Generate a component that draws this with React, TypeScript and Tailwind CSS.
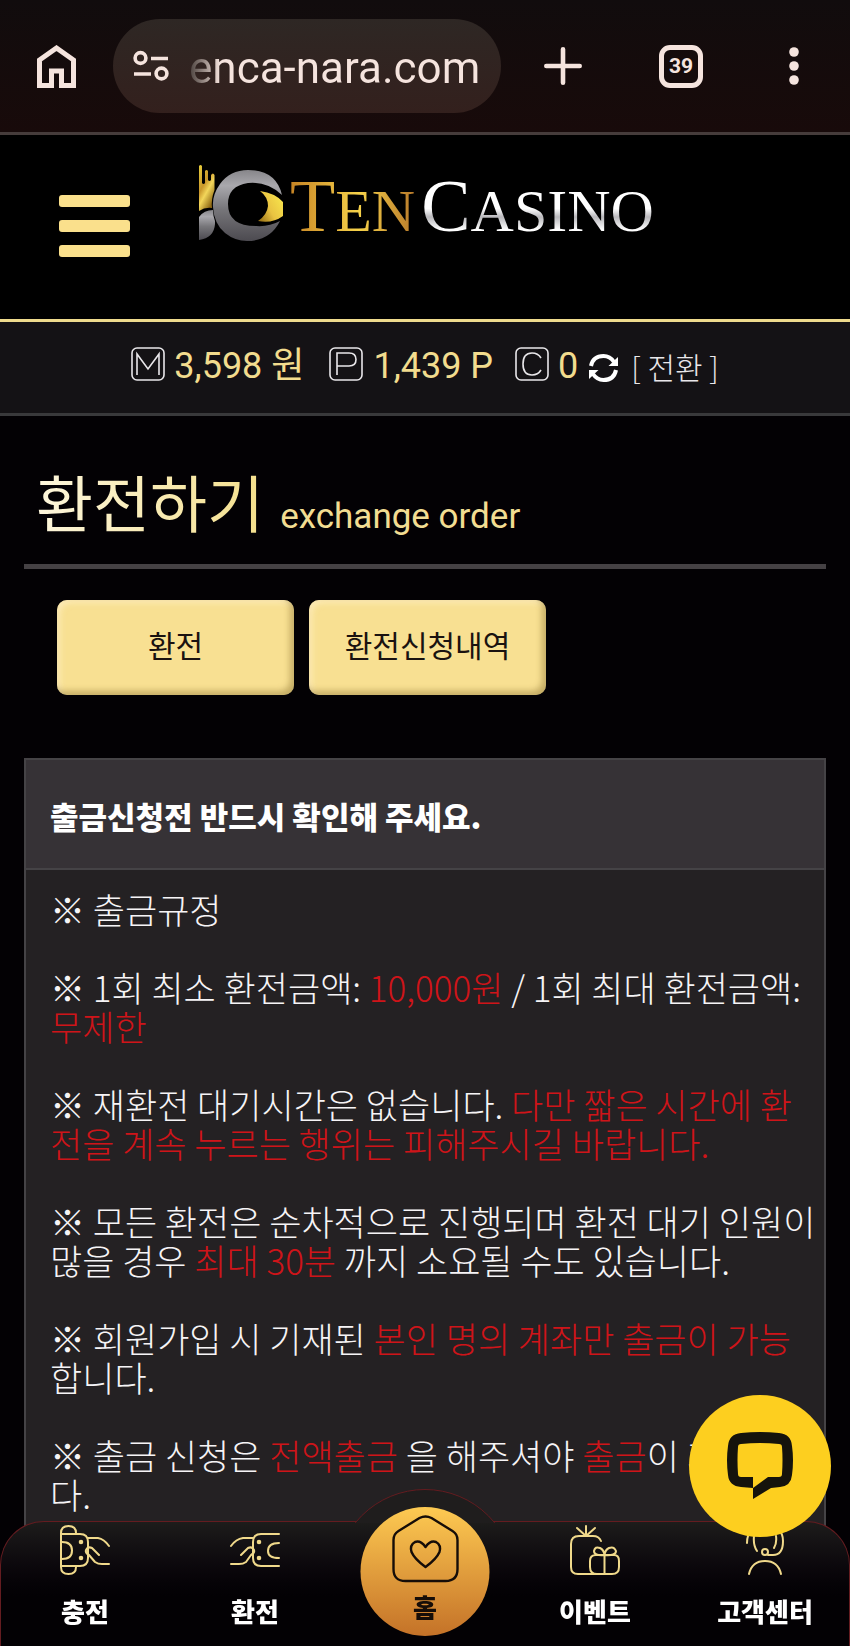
import React from 'react';

const KR = "font-['Noto_Sans_CJK_KR',sans-serif]";
const MIX = "font-[Roboto,'Noto_Sans_CJK_KR',sans-serif]";

function Red({ children }: { children: React.ReactNode }) {
  return <span className="text-[#cf1419]">{children}</span>;
}

function BrowserBar() {
  return (
    <div className={`flex h-[135px] items-center border-b-3 border-[#463c3b] bg-linear-to-b from-[#110c0d] to-[#180a0a] pr-[51px] pl-[37px] text-[#f5e4de] ${MIX}`}>
      <button type="button" aria-label="Home" className="shrink-0">
        <svg width="39" height="43" viewBox="0 0 39 43" fill="none" stroke="currentColor" strokeWidth="5" className="block">
          <path d="M2.5 40.5V15L19.5 3L36.5 15V40.5H24.5V26H14.5V40.5Z" />
        </svg>
      </button>
      <div className="ml-[37px] flex h-[94px] min-w-0 flex-1 items-center rounded-full bg-linear-to-b from-[#2e2724] to-[#33201d] pl-5">
        <svg width="36" height="32" viewBox="0 0 36 32" fill="none" stroke="currentColor" strokeWidth="3.6" className="shrink-0">
          <circle cx="7.5" cy="8" r="5.4" />
          <path d="M18 8.5H35M1 24H18" />
          <circle cx="28.5" cy="23.5" r="5.4" />
        </svg>
        <label htmlFor="address" className="sr-only">Address</label>
        <input
          id="address"
          readOnly
          value="enca-nara.com"
          className="mt-1 ml-5 h-[70px] w-full min-w-0 bg-linear-to-r from-[#4a413d] via-[#f5e4de] via-10% to-[#f5e4de] bg-clip-text text-[44px] leading-[70px] text-transparent outline-none"
        />
      </div>
      <button type="button" aria-label="New tab" className="ml-[43px] shrink-0">
        <svg width="38" height="38" viewBox="0 0 38 38" fill="none" stroke="currentColor" strokeWidth="4.6" strokeLinecap="round" className="block">
          <path d="M19 2.3V35.7M2.3 19H35.7" />
        </svg>
      </button>
      <button type="button" aria-label="Tabs" className="ml-[77px] flex h-[43px] w-[44px] shrink-0 items-center justify-center rounded-[11px] border-5 border-current text-[21px] leading-6 font-bold">
        39
      </button>
      <button type="button" aria-label="Menu" className="ml-[86px] shrink-0">
        <svg width="10" height="38" viewBox="0 0 10 38" fill="currentColor" className="block">
          <circle cx="5" cy="5" r="4.8" />
          <circle cx="5" cy="19" r="4.8" />
          <circle cx="5" cy="33" r="4.8" />
        </svg>
      </button>
    </div>
  );
}

function LogoMark() {
  return (
    <svg width="86" height="80" viewBox="0 0 86 80" className="block shrink-0">
      <defs>
        <linearGradient id="silver" x1="0" y1="0" x2="0" y2="1">
          <stop offset="0" stopColor="#87868a" />
          <stop offset="0.22" stopColor="#a9a8ad" />
          <stop offset="0.55" stopColor="#77767a" />
          <stop offset="1" stopColor="#4c4a50" />
        </linearGradient>
        <linearGradient id="gold" x1="0" y1="0" x2="0.6" y2="1">
          <stop offset="0" stopColor="#e8cf3c" />
          <stop offset="0.45" stopColor="#c9962a" />
          <stop offset="0.65" stopColor="#f3d65a" />
          <stop offset="1" stopColor="#8a6412" />
        </linearGradient>
        <linearGradient id="goldEye" x1="1" y1="0.3" x2="0" y2="1">
          <stop offset="0" stopColor="#f7e34c" />
          <stop offset="0.5" stopColor="#e9c341" />
          <stop offset="1" stopColor="#8f6710" />
        </linearGradient>
      </defs>
      <path fill="url(#gold)" d="M1 2Q2.500 0 4 2V19Q5.500 21 7 19V7Q8.500 5 10 7V16Q11.500 18 13 16V11Q15 8 16.500 11V26Q13 35 14 44Q7 43 1 47Z" />
      <path fill="url(#silver)" d="M1 53Q6 46 15 46Q15 52 17 57V60Q16 74 1 76Z" />
      <path fill="url(#silver)" fillRule="evenodd" d="M84 31Q78 6 50 6Q32 6 22 20Q14 31 15 43Q16 60 27 69Q37 77 49 77Q72 77 82 57Q71 63 58 62Q30 62 30 40Q30 22 50 19Q69 17 84 31Z" />
      <path fill="url(#goldEye)" d="M62 27Q77 29 85 38V52Q74 60 60 57Q69 51 70 42Q70 33 62 27Z" />
    </svg>
  );
}

function SiteHeader() {
  return (
    <header className="flex h-[187px] items-start border-b-3 border-[#eedb8d] bg-black px-[59px]">
      <button type="button" aria-label="Open menu" className="mt-[60px] flex w-[71px] shrink-0 flex-col gap-[13px]">
        <span className="h-3 w-full rounded-[3px] bg-[#fae08c]" />
        <span className="h-3 w-full rounded-[3px] bg-[#fae08c]" />
        <span className="h-3 w-full rounded-[3px] bg-[#fae08c]" />
      </button>
      <a href="#home" aria-label="Ten Casino" className="mt-[29px] ml-[68px] flex items-start">
        <LogoMark />
        <span className="mt-0.5 ml-1.5 flex items-baseline gap-1.5 font-['Liberation_Serif',serif] text-[60px] leading-[80px] whitespace-nowrap">
          <span className="bg-linear-to-r from-[#c68424] via-[#f6d24a] via-55% to-[#b87a2a] bg-clip-text text-transparent">
            <span className="text-[74px]">T</span>EN
          </span>
          <span className="bg-linear-to-b from-white from-50% via-[#b9b8bc] via-60% to-white to-75% bg-clip-text text-transparent">
            <span className="text-[74px]">C</span>ASINO
          </span>
        </span>
      </a>
    </header>
  );
}

function LetterBox({ d }: { d: string }) {
  return (
    <svg width="34" height="34" viewBox="0 0 34 34" fill="none" stroke="#e9e7ea" strokeWidth="1.6" className="-mt-1 shrink-0">
      <rect x="1" y="1" width="32" height="32" rx="5" />
      <path d={d} />
    </svg>
  );
}

function Balance() {
  return (
    <div className={`flex h-[94px] items-center justify-center border-b-3 border-[#39393b] bg-[#141215] pb-1 text-[36px] leading-[44px] whitespace-nowrap text-[#f2dc8e] ${MIX}`}>
      <LetterBox d="M6 28V7L17 22L28 7V28" />
      <span className="ml-[9px]">3,598 원</span>
      <span className="ml-[25px] flex"><LetterBox d="M8 28V6H20Q27 6 27 12.500Q27 19 20 19H8" /></span>
      <span className="ml-[10px]">1,439 P</span>
      <span className="ml-[22px] flex"><LetterBox d="M26 11Q23 6 17 6Q8 6 8 17Q8 28 17 28Q23 28 26 23" /></span>
      <span className="ml-[9px]">0</span>
      <button type="button" className={`ml-[10px] flex items-center gap-3 text-[30px] font-light text-[#e9e7ea] ${KR}`}>
        <svg width="31" height="30" viewBox="0 0 31 30" fill="none" stroke="#fff" strokeWidth="4" className="mt-1 shrink-0">
          <path d="M3 13Q5 3 15.500 3Q22 3 26 9" />
          <path d="M28 17Q26 27 15.500 27Q9 27 5 21" />
          <path d="M30 4V13H20.500Z" fill="#fff" stroke="none" />
          <path d="M1 26V17H10.500Z" fill="#fff" stroke="none" />
        </svg>
        <span>[ 전환 ]</span>
      </button>
    </div>
  );
}

const tabClass =
  'h-[95px] w-[237px] rounded-[10px] bg-[#f8e092] pb-2 text-[30px] leading-10 text-[#1a1210] shadow-[inset_-4px_-4px_6px_rgba(120,95,30,0.4),inset_3px_3px_6px_rgba(255,240,200,0.7)]';

function Notice() {
  return (
    <section className="flex flex-1 flex-col border-2 border-b-0 border-[#454346] bg-[#242123]">
      <h2 className="border-b-2 border-[#454346] bg-[#363236] pt-9 pb-8 pl-6 text-[31px] leading-[40px] font-black text-white">
        출금신청전 반드시 확인해 주세요.
      </h2>
      <div className="flex flex-col gap-[39px] pt-[19px] pb-8 pl-6 text-[35px] leading-[39px] font-light whitespace-nowrap text-[#f6f4f6]">
        <p>※ 출금규정</p>
        <p>
          ※ 1회 최소 환전금액: <Red>10,000원</Red> / 1회 최대 환전금액:<br />
          <Red>무제한</Red>
        </p>
        <p>
          ※ 재환전 대기시간은 없습니다. <Red>다만 짧은 시간에 환<br />전을 계속 누르는 행위는 피해주시길 바랍니다.</Red>
        </p>
        <p>
          ※ 모든 환전은 순차적으로 진행되며 환전 대기 인원이<br />
          많을 경우 <Red>최대 30분</Red> 까지 소요될 수도 있습니다.
        </p>
        <p>
          ※ 회원가입 시 기재된 <Red>본인 명의 계좌만 출금이 가능</Red><br />
          합니다.
        </p>
        <p>
          ※ 출금 신청은 <Red>전액출금</Red> 을 해주셔야 <Red>출금</Red>이 가능합니<br />
          다.
        </p>
      </div>
    </section>
  );
}

function NavIcon({ children }: { children: React.ReactNode }) {
  return (
    <svg width="50" height="50" viewBox="0 0 50 50" fill="none" stroke="#f0d98b" strokeWidth="2" strokeLinecap="round" strokeLinejoin="round" className="block">
      {children}
    </svg>
  );
}

function NavItem({ label, children }: { label: string; children: React.ReactNode }) {
  return (
    <a href={`#${label}`} className="flex flex-1 flex-col items-center gap-4 pt-1 text-white">
      <NavIcon>{children}</NavIcon>
      <span>{label}</span>
    </a>
  );
}

function BottomNav() {
  return (
    <nav className="fixed inset-x-0 bottom-0 h-[125px] text-[26px] leading-10 font-black">
      <div className="h-full rounded-t-[44px] border border-b-0 border-[#641c20] bg-linear-to-b from-[#1d1c1b] to-[#030104] to-60%" />
      <div className="absolute -top-8 left-1/2 h-[34px] w-[180px] -translate-x-1/2 overflow-hidden">
        <div className="size-[180px] rounded-full border border-[#641c20] bg-[#1f1d1d]" />
      </div>
      <div className="absolute inset-0 flex">
        <NavItem label="충전">
          <path d="M1 8Q1 1 8.500 1Q16 1 16 8V9M1 8V42Q1 49 8.500 49Q16 49 16 42V41M1 9H20Q28 9 28 17V33Q28 41 20 41H1" />
          <path d="M2 17Q12 17 12 25.500Q12 34 2 34M28 13H38Q44 14 49 21M39 30L32 23Q28 21 26 25Q25 28 29 30L35 37Q38 39 42 39H49" />
          <circle cx="21" cy="17" r="1.300" fill="#f0d98b" />
          <circle cx="21" cy="33" r="1.300" fill="#f0d98b" />
        </NavItem>
        <NavItem label="환전">
          <path d="M49 9H31Q23 9 23 17V33Q23 41 31 41H49M49 18Q38 18 38 26Q38 33 49 33" />
          <path d="M23 13H13Q6 14 1 21M11 30L18 23Q22 21 24 25Q25 28 21 30L16 37Q13 39 9 39H1" />
          <circle cx="29" cy="17" r="1.300" fill="#f0d98b" />
          <circle cx="29" cy="33" r="1.300" fill="#f0d98b" />
        </NavItem>
        <a href="#home" className="relative flex-1 text-[#160d08]">
          <span className="absolute -top-[14px] left-1/2 flex size-[129px] -translate-x-1/2 flex-col items-center rounded-full bg-linear-to-b from-[#fdca52] to-[#c47228] pt-2">
            <svg width="68" height="68" viewBox="0 0 68 68" fill="none" stroke="currentColor" strokeWidth="2.400" strokeLinejoin="round" className="shrink-0">
              <path d="M28 3Q34 0 40 3L61 16Q66 19 66 25V54Q66 66 54 66H14Q2 66 2 54V25Q2 19 7 16Z" />
              <path d="M34 32Q29 25 23.500 27Q18 30 20 37Q23 44 34 52Q45 44 48 37Q50 30 44.500 27Q39 25 34 32Z" />
            </svg>
            <span className="mt-1">홈</span>
          </span>
        </a>
        <NavItem label="이벤트">
          <path d="M20 49H8Q1 49 1 42V19Q1 11 9 11H23Q29 11 31 16M16 11V1M16 11L7 3M16 11L25 3" />
          <path d="M26 30H44Q49 30 49 36V42Q49 49 42 49H27Q20 49 20 42V36Q20 30 26 30ZM34.500 30V49M34.500 30Q24 31 24 26Q25 21 30 23Q34 25 34.500 30Q35 25 39 23Q44 21 46 26Q46 31 34.500 30M20 49H30" />
        </NavItem>
        <NavItem label="고객센터">
          <path d="M9 49Q12 36 25 36Q38 36 41 49M7 18Q7 1 25 1Q43 1 43 16Q43 30 33 30H28M36 11Q37 18 34 23M14 11Q13 20 17 26" />
          <circle cx="25" cy="27" r="3" />
        </NavItem>
      </div>
    </nav>
  );
}

export default function App() {
  return (
    <div className={`flex min-h-screen flex-col bg-[#030104] ${KR}`}>
      <BrowserBar />
      <SiteHeader />
      <Balance />
      <main className="flex flex-1 flex-col px-6">
        <h1 className="flex h-[153px] items-baseline gap-4 border-b-5 border-[#454144] pt-10 pl-3 leading-[90px] whitespace-nowrap">
          <span className="bg-linear-to-r from-[#fdf6dc] to-[#f5e08c] bg-clip-text text-[62px] text-transparent">환전하기</span>
          <span className="font-[Roboto,sans-serif] text-[35px] text-[#f2dd92]">exchange order</span>
        </h1>
        <div className="mt-[31px] mb-[63px] flex gap-[15px] pl-[33px]">
          <button type="button" className={tabClass}>환전</button>
          <button type="button" className={tabClass}>환전신청내역</button>
        </div>
        <Notice />
      </main>
      <BottomNav />
      <button type="button" aria-label="Chat" className="fixed right-[19px] bottom-[109px] flex size-[142px] items-center justify-center rounded-full bg-[#fdcf1f]">
        <svg width="66" height="68" viewBox="0 0 66 68" className="block">
          <path fill="#15130c" fillRule="evenodd" d="M14 1Q33 -1 52 1Q64 2 65 14Q67 28 65 43Q64 54 53 55L44 56L26 67V45H14Q11 45 11 42Q10 28 11 15Q11 12 14 12Q33 10 52 12Q55 12 55 15Q56 28 55 42Q55 45 52 45H41L26 56L14 55Q2 54 1 43Q-1 28 1 14Q2 2 14 1Z" />
        </svg>
      </button>
    </div>
  );
}
